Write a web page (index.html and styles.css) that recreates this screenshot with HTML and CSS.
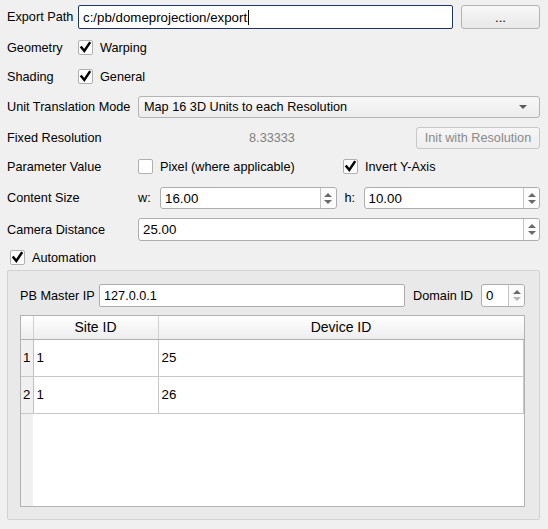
FILE: index.html
```html
<!DOCTYPE html>
<html lang="en">
<head>
    <meta charset="UTF-8">
    <meta name="viewport" content="width=device-width, initial-scale=1.0">
    <title>Dome Projection Export</title>
    <link rel="stylesheet" href="styles.css">
</head>
<body>
    <div class="panel">
        <!-- export path -->
        <div class="row row-path">
            <span class="lbl lbl-path">Export Path</span>
            <div class="field focused">c:/pb/domeprojection/export<span class="caret"></span></div>
            <button class="btn btn-browse">...</button>
        </div>

        <div class="row row-check r-geometry">
            <span class="lbl lbl-path">Geometry</span>
            <span class="check on"><svg viewBox="0 0 15 15"><path d="M3.5 7.5 L6.3 11 L11.5 3.2"/></svg></span>
            <span class="opt">Warping</span>
        </div>

        <div class="row row-check r-shading">
            <span class="lbl lbl-path">Shading</span>
            <span class="check on"><svg viewBox="0 0 15 15"><path d="M3.5 7.5 L6.3 11 L11.5 3.2"/></svg></span>
            <span class="opt">General</span>
        </div>

        <div class="row r-unit">
            <span class="lbl">Unit Translation Mode</span>
            <div class="combo">
                <span>Map 16 3D Units to each Resolution</span>
                <span class="arrow"></span>
            </div>
        </div>

        <div class="row r-fixed">
            <span class="lbl">Fixed Resolution</span>
            <span class="value">8.33333</span>
            <button class="btn btn-init" disabled>Init with Resolution</button>
        </div>

        <div class="row row-check r-param">
            <span class="lbl">Parameter Value</span>
            <div class="opt-group">
                <span class="check"></span>
                <span class="opt">Pixel (where applicable)</span>
            </div>
            <span class="check on"><svg viewBox="0 0 15 15"><path d="M3.5 7.5 L6.3 11 L11.5 3.2"/></svg></span>
            <span class="opt">Invert Y-Axis</span>
        </div>

        <div class="row r-size">
            <span class="lbl">Content Size</span>
            <span class="sub-lbl sub-w">w:</span>
            <div class="spin"><span class="spin-text">16.00</span><span class="spin-btn"><i class="up"></i><i class="down"></i></span></div>
            <span class="sub-lbl sub-h">h:</span>
            <div class="spin"><span class="spin-text">10.00</span><span class="spin-btn"><i class="up"></i><i class="down"></i></span></div>
        </div>

        <div class="row r-camera">
            <span class="lbl">Camera Distance</span>
            <div class="spin tall"><span class="spin-text">25.00</span><span class="spin-btn"><i class="up"></i><i class="down"></i></span></div>
        </div>

        <div class="row row-check r-auto">
            <span class="check on"><svg viewBox="0 0 15 15"><path d="M3.5 7.5 L6.3 11 L11.5 3.2"/></svg></span>
            <span class="opt">Automation</span>
        </div>

        <!-- automation group -->
        <div class="group">
            <div class="row r-master">
                <span class="lbl-master">PB Master IP</span>
                <div class="field">127.0.0.1</div>
                <span class="lbl-domain">Domain ID</span>
                <div class="spin small"><span class="spin-text">0</span><span class="spin-btn"><i class="up"></i><i class="down dim"></i></span></div>
            </div>

            <div class="table-box">
                <table class="sites">
                    <thead>
                        <tr><th class="corner"></th><th class="col-site">Site ID</th><th>Device ID</th></tr>
                    </thead>
                    <tbody>
                        <tr><td class="num">1</td><td>1</td><td>25</td></tr>
                        <tr><td class="num">2</td><td>1</td><td>26</td></tr>
                    </tbody>
                </table>
            </div>
        </div>
    </div>
</body>
</html>
```

FILE: styles.css
```css
* {
    box-sizing: border-box;
}

body {
    margin: 0;
    background: #f0f0f0;
    font-family: "Liberation Sans", Arial, sans-serif;
    font-size: 12.7px;
    color: #000;
}

.panel {
    padding: 5px 8px 0 7px;
}

.row {
    display: flex;
    align-items: center;
}

.lbl {
    width: 131px;
    flex-shrink: 0;
    white-space: nowrap;
}

.lbl-path {
    width: 71px;
}

/* row spacing */
.row-path { height: 24px; }
.r-geometry { margin-top: 11px; height: 15px; }
.r-shading { margin-top: 14px; height: 15px; }
.r-unit { margin-top: 12px; height: 22px; }
.r-fixed { margin-top: 9px; height: 22px; }
.r-param { margin-top: 10px; height: 15px; }
.r-size { margin-top: 13px; height: 22px; }
.r-camera { margin-top: 9px; height: 23px; }
.r-auto { margin-top: 9px; height: 15px; padding-left: 3px; }

.field {
    flex: 1;
    height: 100%;
    background: #fff;
    border: 1px solid #adadad;
    border-radius: 2px;
    padding: 0 4px;
    display: flex;
    align-items: center;
    white-space: nowrap;
}

.field.focused {
    border-color: #1b3566;
    font-size: 13.3px;
}

.caret {
    display: inline-block;
    width: 1px;
    height: 15px;
    background: #000;
    margin-left: 1px;
}

.btn {
    font-family: inherit;
    font-size: 12.7px;
    background: linear-gradient(#f7f7f7, #e8e8e8);
    border: 1px solid #b4b4b4;
    border-radius: 3px;
    color: #000;
    padding: 0;
    height: 100%;
}

.btn-browse {
    width: 79px;
    margin-left: 8px;
    font-size: 13px;
}

.btn-init {
    width: 124px;
    color: #8a8a8a;
    border-color: #c8c8c8;
    background: linear-gradient(#f6f6f6, #eeeeee);
}

.value {
    flex: 1;
    text-align: center;
    color: #808080;
    padding-right: 10px;
}

.check {
    width: 15px;
    height: 15px;
    flex-shrink: 0;
    background: #fff;
    border: 1px solid #b0b0b0;
    border-radius: 2px;
    position: relative;
}

.check svg {
    position: absolute;
    left: -1px;
    top: -1px;
    width: 15px;
    height: 15px;
}

.check path {
    fill: none;
    stroke: #000;
    stroke-width: 2.5;
    stroke-linecap: square;
}

.opt {
    margin-left: 7px;
    white-space: nowrap;
}

.opt-group {
    width: 205px;
    display: flex;
    align-items: center;
}

.combo {
    flex: 1;
    height: 100%;
    border: 1px solid #b4b4b4;
    border-radius: 3px;
    background: linear-gradient(#f8f8f8, #ececec);
    display: flex;
    align-items: center;
    justify-content: space-between;
    padding: 0 12px 0 5px;
}

.arrow {
    width: 0;
    height: 0;
    border-left: 4px solid transparent;
    border-right: 4px solid transparent;
    border-top: 4px solid #5a5a5a;
}

.sub-lbl {
    flex-shrink: 0;
}

.sub-w { width: 22px; }
.sub-h { width: 19px; margin-left: 8px; }

.spin {
    flex: 1;
    height: 100%;
    background: #fff;
    border: 1px solid #adadad;
    border-radius: 3px;
    display: flex;
    align-items: stretch;
}

.spin-text {
    flex: 1;
    display: flex;
    align-items: center;
    padding-left: 4px;
    font-size: 13.3px;
}

.spin-btn {
    width: 16px;
    border-left: 1px solid #c4c4c4;
    background: #fbfbfb;
    display: flex;
    flex-direction: column;
    align-items: center;
    justify-content: center;
    gap: 3px;
    border-radius: 0 3px 3px 0;
}

.spin-btn i {
    width: 0;
    height: 0;
    border-left: 4px solid transparent;
    border-right: 4px solid transparent;
}

.spin-btn .up { border-bottom: 4px solid #6a6a6a; }
.spin-btn .down { border-top: 4px solid #6a6a6a; }
.spin-btn .dim { border-top-color: #b5b5b5; }

/* automation group */
.group {
    margin-top: 5px;
    height: 250px;
    background: #e9e9e9;
    border: 1px solid #d2d2d2;
    border-radius: 2px;
    padding: 13px 14px 12px 12px;
    display: flex;
    flex-direction: column;
}

.r-master {
    height: 23px;
}

.lbl-master {
    width: 79px;
    flex-shrink: 0;
}

.lbl-domain {
    margin: 0 8px 0 8px;
    white-space: nowrap;
}

.spin.small {
    flex: 0 0 44px;
}

.table-box {
    margin-top: 8px;
    flex: 1;
    border: 1px solid #b2b2b2;
    background: linear-gradient(to right, #f0f0f0 12px, #fff 12px);
}

.sites {
    width: 100%;
    border-collapse: collapse;
    font-size: 13.3px;
}

.sites th {
    height: 23px;
    font-weight: normal;
    font-size: 14px;
    background: linear-gradient(#ffffff, #ededed);
    border-bottom: 1px solid #b0b0b0;
    border-right: 1px solid #d0d0d0;
    padding: 0;
}

.sites th:last-child {
    border-right: none;
}

.sites .corner {
    width: 12px;
}

.sites .col-site {
    width: 125px;
}

.sites td {
    height: 37px;
    padding: 0 0 0 3px;
    border-bottom: 1px solid #c8c8c8;
    border-right: 1px solid #c8c8c8;
    background: #fff;
}

.sites td.num {
    background: #f0f0f0;
    padding: 0;
    text-align: center;
    border-right: 1px solid #c0c0c0;
}
```
